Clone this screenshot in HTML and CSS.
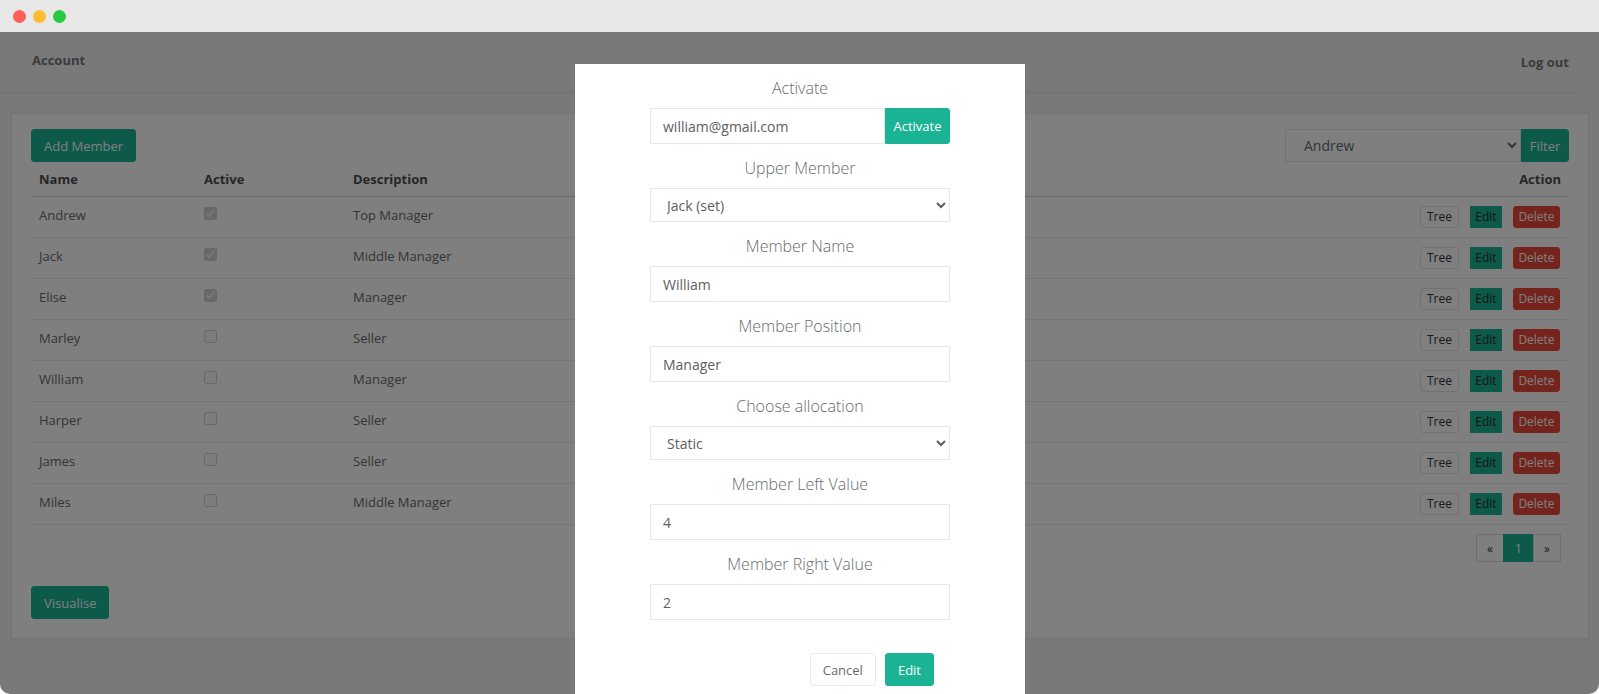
FILE: index.html
```html
<!DOCTYPE html>
<html lang="en">
<head>
    <meta charset="UTF-8">
    <meta name="viewport" content="width=device-width, initial-scale=1.0">
    <title>Members</title>
    <link rel="stylesheet" href="styles.css">
</head>
<body>
    <div class="window">
        <!-- Window title bar -->
        <div class="titlebar">
            <span class="dot dot-red"></span>
            <span class="dot dot-yellow"></span>
            <span class="dot dot-green"></span>
        </div>

        <div class="viewport">
            <!-- Top navigation -->
            <div class="topbar">
                <a class="nav-link" href="#">Account</a>
                <a class="nav-link nav-logout" href="#">Log out</a>
            </div>

            <div class="content">
                <div class="card">
                    <div class="toolbar">
                        <button class="btn btn-primary">Add Member</button>
                        <form class="filter">
                            <select class="filter-select">
                                <option>Andrew</option>
                                <option>Jack</option>
                                <option>Elise</option>
                            </select>
                            <button class="btn btn-primary btn-filter" type="button">Filter</button>
                        </form>
                    </div>

                    <table class="members">
                        <thead>
                            <tr>
                                <th class="col-name">Name</th>
                                <th class="col-active">Active</th>
                                <th>Description</th>
                                <th class="col-action">Action</th>
                            </tr>
                        </thead>
                        <tbody>
                            <tr>
                                <td>Andrew</td>
                                <td><input type="checkbox" checked disabled></td>
                                <td>Top Manager</td>
                                <td><div class="actions"><button class="btn-xs btn-tree">Tree</button><button class="btn-xs btn-edit">Edit</button><button class="btn-xs btn-delete">Delete</button></div></td>
                            </tr>
                            <tr>
                                <td>Jack</td>
                                <td><input type="checkbox" checked disabled></td>
                                <td>Middle Manager</td>
                                <td><div class="actions"><button class="btn-xs btn-tree">Tree</button><button class="btn-xs btn-edit">Edit</button><button class="btn-xs btn-delete">Delete</button></div></td>
                            </tr>
                            <tr>
                                <td>Elise</td>
                                <td><input type="checkbox" checked disabled></td>
                                <td>Manager</td>
                                <td><div class="actions"><button class="btn-xs btn-tree">Tree</button><button class="btn-xs btn-edit">Edit</button><button class="btn-xs btn-delete">Delete</button></div></td>
                            </tr>
                            <tr>
                                <td>Marley</td>
                                <td><input type="checkbox" disabled></td>
                                <td>Seller</td>
                                <td><div class="actions"><button class="btn-xs btn-tree">Tree</button><button class="btn-xs btn-edit">Edit</button><button class="btn-xs btn-delete">Delete</button></div></td>
                            </tr>
                            <tr>
                                <td>William</td>
                                <td><input type="checkbox" disabled></td>
                                <td>Manager</td>
                                <td><div class="actions"><button class="btn-xs btn-tree">Tree</button><button class="btn-xs btn-edit">Edit</button><button class="btn-xs btn-delete">Delete</button></div></td>
                            </tr>
                            <tr>
                                <td>Harper</td>
                                <td><input type="checkbox" disabled></td>
                                <td>Seller</td>
                                <td><div class="actions"><button class="btn-xs btn-tree">Tree</button><button class="btn-xs btn-edit">Edit</button><button class="btn-xs btn-delete">Delete</button></div></td>
                            </tr>
                            <tr>
                                <td>James</td>
                                <td><input type="checkbox" disabled></td>
                                <td>Seller</td>
                                <td><div class="actions"><button class="btn-xs btn-tree">Tree</button><button class="btn-xs btn-edit">Edit</button><button class="btn-xs btn-delete">Delete</button></div></td>
                            </tr>
                            <tr>
                                <td>Miles</td>
                                <td><input type="checkbox" disabled></td>
                                <td>Middle Manager</td>
                                <td><div class="actions"><button class="btn-xs btn-tree">Tree</button><button class="btn-xs btn-edit">Edit</button><button class="btn-xs btn-delete">Delete</button></div></td>
                            </tr>
                        </tbody>
                    </table>

                    <div class="pager">
                        <a href="#" class="page">&laquo;</a>
                        <a href="#" class="page page-active">1</a>
                        <a href="#" class="page">&raquo;</a>
                    </div>

                    <button class="btn btn-primary btn-visualise">Visualise</button>
                </div>
            </div>

            <!-- Modal: edit member -->
            <div class="backdrop"></div>
            <div class="modal">
                <form class="modal-form">
                    <label class="field-label">Activate</label>
                    <div class="input-group">
                        <input class="field" type="text" value="william@gmail.com">
                        <button class="btn btn-primary btn-activate" type="button">Activate</button>
                    </div>

                    <label class="field-label">Upper Member</label>
                    <select class="field field-select">
                        <option>Jack (set)</option>
                        <option>Andrew</option>
                    </select>

                    <label class="field-label">Member Name</label>
                    <input class="field" type="text" value="William">

                    <label class="field-label">Member Position</label>
                    <input class="field" type="text" value="Manager">

                    <label class="field-label">Choose allocation</label>
                    <select class="field field-select">
                        <option>Static</option>
                        <option>Dynamic</option>
                    </select>

                    <label class="field-label">Member Left Value</label>
                    <input class="field" type="text" value="4">

                    <label class="field-label">Member Right Value</label>
                    <input class="field" type="text" value="2">

                    <div class="modal-footer">
                        <button class="btn btn-white" type="button">Cancel</button>
                        <button class="btn btn-primary" type="button">Edit</button>
                    </div>
                </form>
            </div>
        </div>
    </div>
</body>
</html>
```

FILE: styles.css
```css
/* Base */
* {
    box-sizing: border-box;
}

html, body {
    margin: 0;
    padding: 0;
    background: #fff;
    font-family: 'Open Sans', sans-serif;
    font-size: 13px;
    color: #676a6c;
}

/* Window frame */
.window {
    height: 694px;
    border-radius: 0 0 10px 10px;
    overflow: hidden;
}

.titlebar {
    height: 32px;
    background: #e8e8e8;
    display: flex;
    align-items: center;
    gap: 7px;
    padding: 1px 0 0 13px;
}

.dot {
    width: 13px;
    height: 13px;
    border-radius: 50%;
}

.dot-red { background: #fe5f57; }
.dot-yellow { background: #febc2e; }
.dot-green { background: #28c840; }

.viewport {
    position: relative;
    height: 662px;
    overflow: hidden;
    background: #f3f3f4;
}

/* Top navigation */
.topbar {
    height: 61px;
    margin-right: 19px;
    padding: 19px 11px 0 32px;
    display: flex;
    justify-content: space-between;
    align-items: flex-start;
    border-bottom: 1px solid #e2e2e2;
}

.nav-link {
    font-weight: 700;
    line-height: 18px;
    color: #777;
    text-decoration: none;
}

.nav-logout {
    margin-top: 2px;
}

.content {
    padding: 20px 10px 0 11px;
}

.card {
    background: #fff;
    border: 1px solid #e7eaec;
    padding: 15px 19px 19px;
}

/* Buttons */
.btn {
    height: 33px;
    padding: 0 12px;
    border: 1px solid transparent;
    border-radius: 3px;
    font-family: inherit;
    font-size: 13px;
    cursor: pointer;
}

.btn-primary {
    background: #1ab394;
    border-color: #1ab394;
    color: #fff;
}

.btn-white {
    background: #fff;
    border-color: #e7eaec;
    color: #676a6c;
}

.toolbar {
    display: flex;
    justify-content: space-between;
}

.filter {
    display: flex;
    margin: 0;
}

.filter-select {
    width: 236px;
    height: 33px;
    padding: 0 8px 0 14px;
    border: 1px solid #e5e6e7;
    border-radius: 0;
    background: #fff;
    font-family: inherit;
    font-size: 14px;
    color: #676a6c;
}

.btn-filter {
    width: 48px;
    padding: 0;
    border-radius: 0 3px 3px 0;
}

/* Members table */
.members {
    width: 100%;
    border-collapse: collapse;
}

.members th {
    padding: 8px;
    line-height: 18px;
    text-align: left;
    font-weight: 700;
    color: #4d4d4d;
    border-bottom: 1px solid #dddddd;
}

.members .col-name { width: 165px; }
.members .col-active { width: 149px; }
.members .col-action { text-align: right; width: 300px; }

.members td {
    padding: 9px 8px;
    line-height: 18px;
    vertical-align: top;
    border-bottom: 1px solid #e7eaec;
}

.members input[type="checkbox"] {
    margin: 1px 0 0 0;
    vertical-align: top;
}

.actions {
    display: flex;
    justify-content: flex-end;
    gap: 11px;
    padding-right: 1px;
}

.btn-xs {
    height: 22px;
    padding: 0 6px;
    border: 1px solid transparent;
    border-radius: 3px;
    font-family: inherit;
    font-size: 12px;
    line-height: 20px;
    cursor: pointer;
}

.btn-tree {
    background: #fff;
    border-color: #e4e4e4;
    color: #333;
}

.btn-edit {
    width: 32px;
    padding: 0;
    background: #1ab394;
    border-color: #1ab394;
    color: #2a2a2a;
    border-radius: 0;
}

.btn-delete {
    width: 47px;
    padding: 0;
    background: #e8493a;
    border-color: #e8493a;
    color: #fff;
}

/* Pagination */
.pager {
    display: flex;
    justify-content: flex-end;
    margin: 9px 8px 0 0;
}

.page {
    height: 28px;
    width: 28px;
    border: 1px solid #dddddd;
    margin-left: -1px;
    display: flex;
    align-items: center;
    justify-content: center;
    font-size: 12px;
    color: #333;
    text-decoration: none;
}

.page-active {
    width: 31px;
    background: #1ab394;
    border-color: #1ab394;
    color: #fff;
}

.btn-visualise {
    margin-top: 24px;
}

/* Modal */
.backdrop {
    position: absolute;
    top: 0;
    left: 0;
    width: 100%;
    height: 100%;
    background: rgba(0, 0, 0, 0.5);
}

.modal {
    position: absolute;
    top: 32px;
    left: 575px;
    width: 450px;
    background: #fff;
    padding: 13px 0 20px;
}

.modal-form {
    width: 300px;
    margin: 0 auto;
    display: flex;
    flex-direction: column;
}

.field-label {
    display: block;
    text-align: center;
    font-size: 16px;
    font-weight: 300;
    line-height: 22px;
    margin-bottom: 9px;
    color: #676a6c;
}

.field {
    height: 36px;
    margin-bottom: 13px;
    padding: 0 12px;
    border: 1px solid #e5e6e7;
    border-radius: 1px;
    background: #fff;
    font-family: inherit;
    font-size: 14px;
    color: #5e5e5e;
}

.field-select {
    height: 34px;
    padding: 0 8px 0 12px;
}

.input-group {
    display: flex;
    margin-bottom: 13px;
}

.input-group .field {
    flex: 1;
    min-width: 0;
    margin-bottom: 0;
}

.btn-activate {
    width: 65px;
    height: 36px;
    padding: 0;
    border-radius: 0 3px 3px 0;
}

.modal-footer {
    display: flex;
    justify-content: flex-end;
    gap: 9px;
    margin-top: 20px;
    padding-right: 16px;
}
```
